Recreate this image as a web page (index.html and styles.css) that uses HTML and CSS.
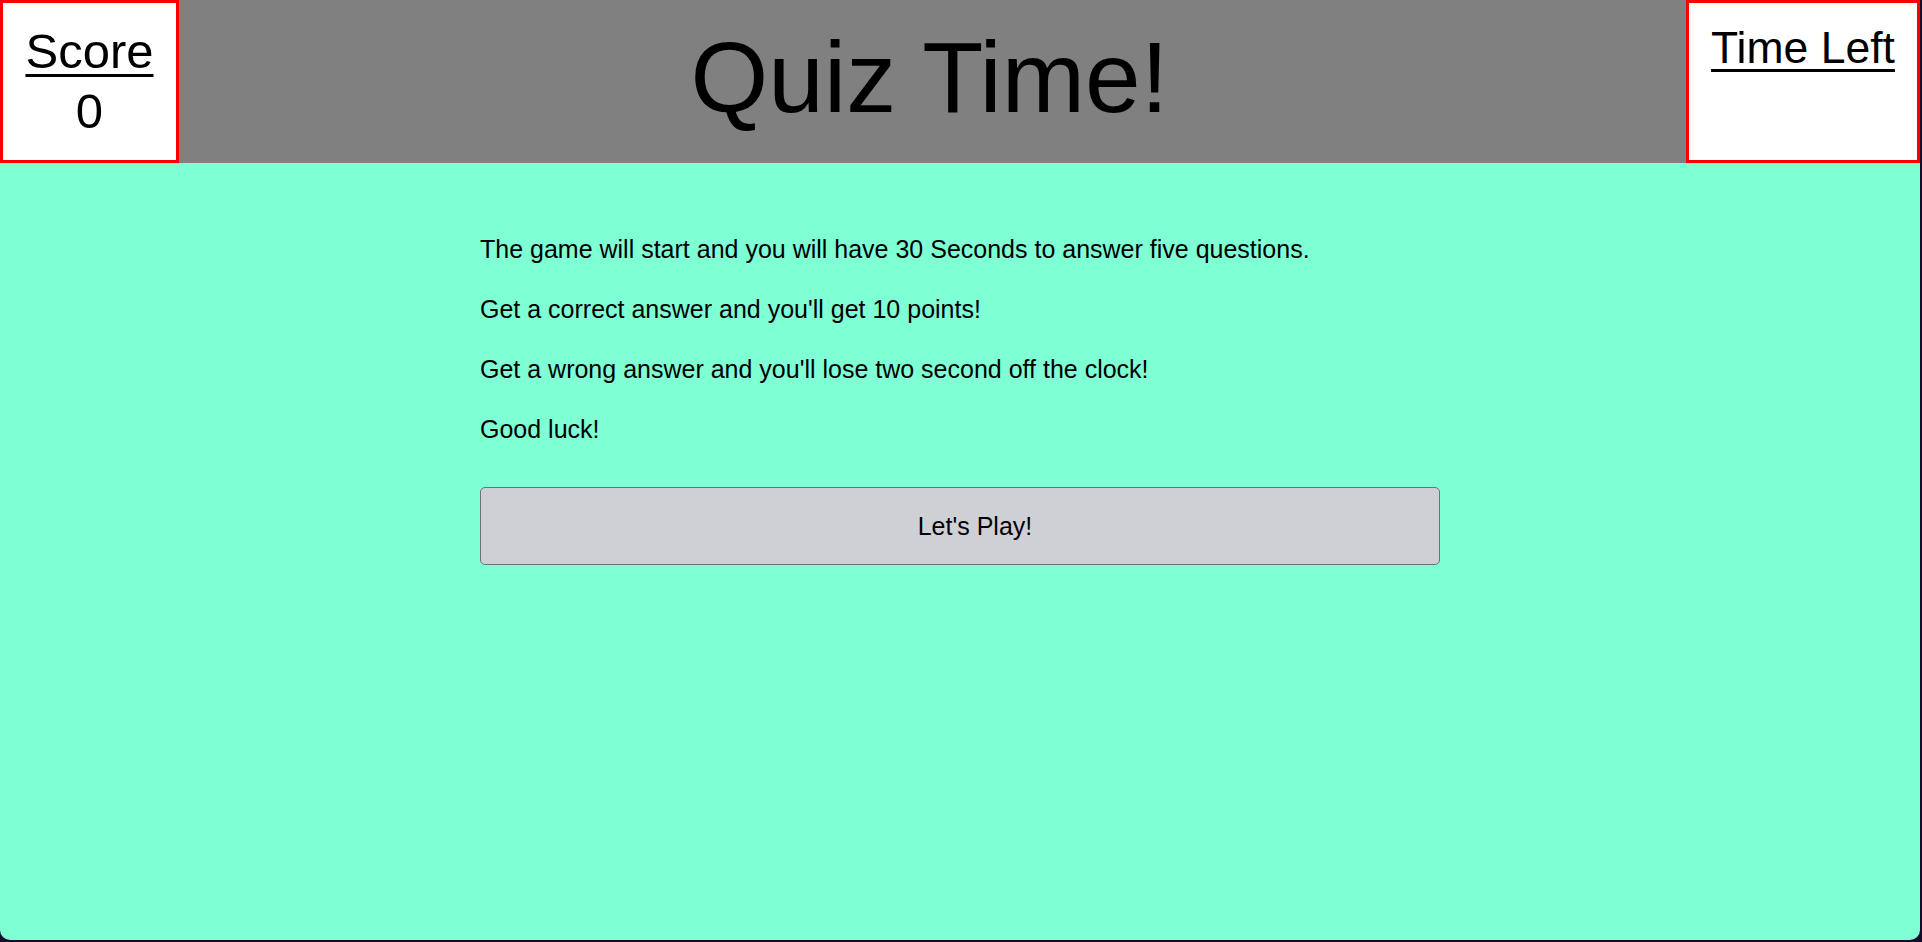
FILE: index.html
```html
<!DOCTYPE html>
<html lang="en">
<head>
<meta charset="utf-8">
<title>Quiz Time!</title>
<link rel="stylesheet" href="styles.css">
</head>
<body>
<div class="window">
  <header class="topbar">
    <div class="box score-box">
      <div class="box-label">Score</div>
      <div class="score-value">0</div>
    </div>
    <h1 class="title">Quiz Time!</h1>
    <div class="box time-box">
      <div class="box-label">Time Left</div>
    </div>
  </header>
  <main class="content">
    <div class="intro">
      <p>The game will start and you will have 30 Seconds to answer five questions.</p>
      <p>Get a correct answer and you'll get 10 points!</p>
      <p>Get a wrong answer and you'll lose two second off the clock!</p>
      <p>Good luck!</p>
    </div>
    <button class="play-btn" type="button">Let's Play!</button>
  </main>
</div>
</body>
</html>
```
FILE: styles.css
```css
html, body {
  margin: 0;
  padding: 0;
}
body {
  background: #160a2a;
  font-family: "Liberation Sans", Arial, Helvetica, sans-serif;
  color: #000;
  height: 942px;
  overflow: hidden;
}
.window {
  width: 1920px;
  height: 940px;
  background: #7fffd4;
  border-bottom-left-radius: 10px;
  border-bottom-right-radius: 10px;
  overflow: hidden;
  display: flex;
  flex-direction: column;
}
.topbar {
  display: flex;
  align-items: stretch;
  height: 163px;
  background: #808080;
  flex: none;
}
.box {
  background: #fff;
  border: 3px solid #ff0000;
  text-align: center;
  box-sizing: border-box;
}
.box-label {
  text-decoration: underline;
  text-decoration-thickness: 3px;
  text-underline-offset: 6px;
}
.score-box {
  padding: 18px 0 0;
  width: 179px;
  font-size: 49px;
  line-height: 60px;
}
.time-box {
  padding: 19px 0 0;
  width: 234px;
  font-size: 44.5px;
  line-height: 51px;
}
.title {
  flex: 1;
  margin: 0;
  padding-top: 20px;
  font-size: 100px;
  font-weight: normal;
  line-height: 115px;
  text-align: center;
  padding-right: 6px;
}
.content {
  width: 960px;
  margin: 0 auto;
  padding-top: 72px;
}
.intro {
  display: flex;
  flex-direction: column;
  gap: 31px;
}
.intro p {
  margin: 0;
  font-size: 25px;
  line-height: 29px;
}
.play-btn {
  display: block;
  width: 960px;
  height: 78px;
  margin-top: 43px;
  background: #cfd0d5;
  border: 1px solid #6f6d78;
  border-radius: 5px;
  font-family: "Liberation Sans", Arial, Helvetica, sans-serif;
  font-size: 25px;
  color: #000;
  padding: 0 0 0 30px;
  text-align: center;
}
```
